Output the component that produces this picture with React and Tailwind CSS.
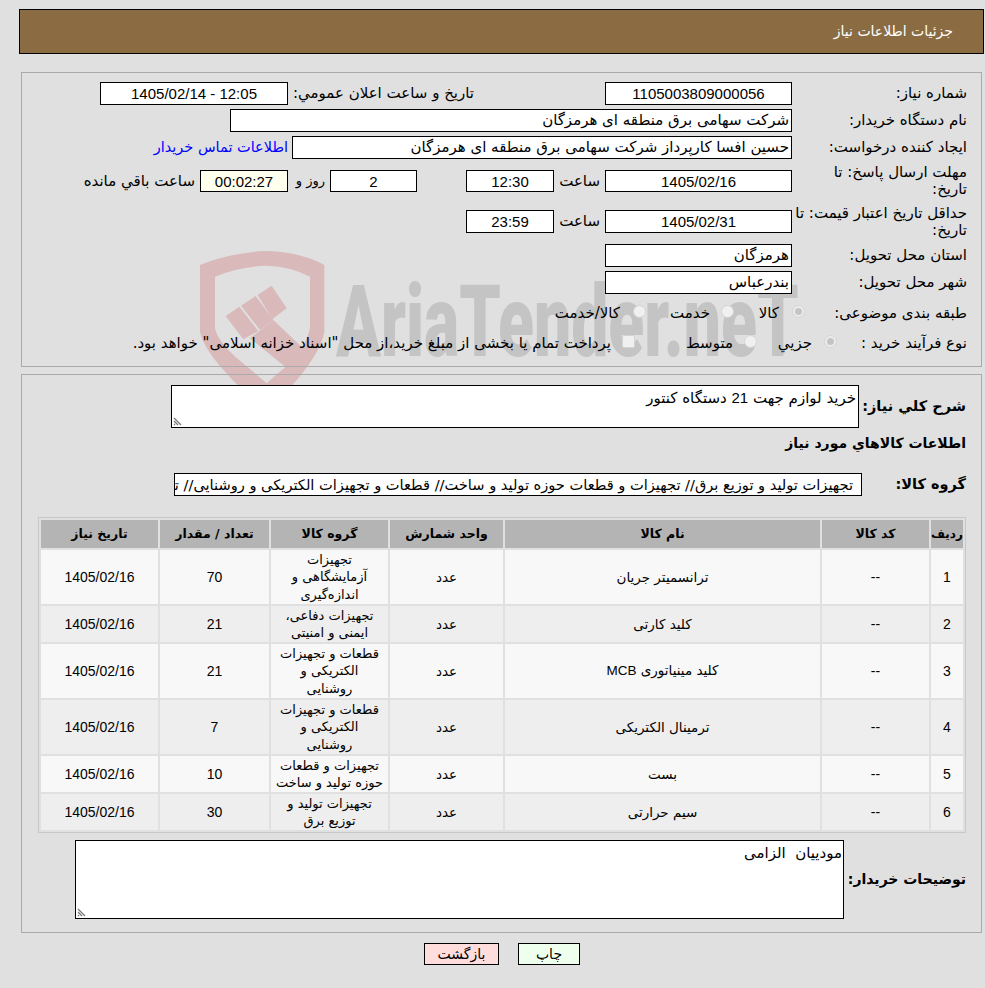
const NUM = "font-['Liberation_Sans',sans-serif]";

const ROWS = [
  { id: 1, name: "ترانسمیتر جریان", group: ["تجهیزات", "آزمایشگاهی و", "اندازه‌گیری"], qty: "70", h: "h-[54px]" },
  { id: 2, name: "کلید کارتی", group: ["تجهیزات دفاعی،", "ایمنی و امنیتی"], qty: "21", h: "h-[36px]" },
  { id: 3, name: <>کلید مینیاتوری <span className={NUM}>MCB</span></>, group: ["قطعات و تجهیزات", "الکتریکی و", "روشنایی"], qty: "21", h: "h-[54px]" },
  { id: 4, name: "ترمینال الکتریکی", group: ["قطعات و تجهیزات", "الکتریکی و", "روشنایی"], qty: "7", h: "h-[54px]" },
  { id: 5, name: "بست", group: ["تجهیزات و قطعات", "حوزه تولید و ساخت"], qty: "10", h: "h-[36px]" },
  { id: 6, name: "سیم حرارتی", group: ["تجهیزات تولید و", "توزیع برق"], qty: "30", h: "h-[36px]" },
];

const Field = ({ className = "", h = "h-[23px]", children }) => (
  <div className={`${NUM} ${h} border border-black flex items-center justify-center text-[15px] leading-none shrink-0 ${className}`}>
    {children}
  </div>
);

const TextField = ({ className = "", size = "text-[15px]", children }) => (
  <div className={`h-[23px] border border-black bg-white flex items-center px-[2px] ${size} whitespace-nowrap overflow-hidden shrink-0 ${className}`}>
    {children}
  </div>
);

const Label = ({ w = "w-[175px]", children }) => (
  <div className={`${w} shrink-0 text-[15px] leading-[17px] whitespace-nowrap`}>{children}</div>
);

const Radio = ({ checked, square }) => (
  <span className={`inline-flex items-center justify-center w-[13px] h-[13px] mb-[4px] shrink-0 border border-[#d4d4d4] ${checked ? "bg-[#ececec]" : "bg-[#f0f0f0]"} ${square ? "rounded-[2px]" : "rounded-full"}`}>
    {checked && <span className="w-[7px] h-[7px] rounded-full bg-[#c4c4c4]" />}
  </span>
);

const Grip = () => (
  <svg className="absolute left-[1px] bottom-[1px]" width="10" height="10" viewBox="0 0 10 10">
    <path d="M1 2l7 7M1 5l4 4M1 8l1 1" stroke="#777" strokeWidth="1.2" fill="none" />
  </svg>
);

const Watermark = () => (
  <div className="absolute inset-0 pointer-events-none">
    <svg className="absolute left-[195px] top-[245px]" width="140" height="145" viewBox="0 0 420 435">
      <g fill="#d9b9b9">
        <path
          fillRule="evenodd"
          d="M215 18 Q110 22 15 60 V260 Q30 340 215 500 Q372 350 388 260 V60 Q320 22 215 18 Z M215 62 Q130 65 60 95 V250 Q70 300 165 372 L215 415 L295 345 Q335 300 345 250 V95 Q290 65 215 62 Z"
        />
        <path d="M92 213 L133 185 L190 258 L145 283 Z" />
        <path d="M138 182 L182 153 L235 225 L195 255 Z" />
        <path d="M188 150 L230 122 L275 190 L232 222 Z" />
        <path d="M165 280 L235 225 L335 320 L295 385 Z" />
      </g>
    </svg>
    <div className="absolute left-[336px] top-[267px] font-['Roboto',sans-serif] font-black text-[#c4c4c4] text-[100px] leading-[110px] whitespace-nowrap origin-left scale-x-[0.66]" dir="ltr">
      AriaTender.neT
    </div>
  </div>
);

export default function App() {
  return (
    <div dir="rtl" className="font-['DejaVu_Sans',sans-serif] relative w-[985px] h-[988px] bg-[#e0e0e0] text-black overflow-hidden pt-[9px]">
      <Watermark />
      <div className="relative mr-[1px] w-[965px] h-[45px] border border-black bg-[#8b6c42] text-white text-[14px] flex items-center pr-[30px]">
        جزئیات اطلاعات نیاز
      </div>

      <div className="relative mt-[18px] mr-[3px] w-[961px] h-[295px] border border-[#aaa] pt-[7px] pr-[14px]">
        <div className="flex flex-col">
          <div className="flex items-center h-[27px]">
            <Label>شماره نیاز:</Label>
            <Field className="w-[187px] bg-white">1105003809000056</Field>
            <div className="w-[186px] mr-[131px] text-[15px] shrink-0 whitespace-nowrap">تاریخ و ساعت اعلان عمومي:</div>
            <Field className="w-[188px] bg-white"><span dir="ltr">1405/02/14 - 12:05</span></Field>
          </div>
          <div className="flex items-center h-[27px]">
            <Label>نام دستگاه خریدار:</Label>
            <TextField className="w-[562px]">شرکت سهامی برق منطقه ای هرمزگان</TextField>
          </div>
          <div className="flex items-center h-[27px]">
            <Label>ایجاد کننده درخواست:</Label>
            <TextField className="w-[500px]">حسین افسا کارپرداز شرکت سهامی برق منطقه ای هرمزگان</TextField>
            <a href="#" className="mr-[4px] text-[14.5px] text-[#0000ff] whitespace-nowrap">اطلاعات تماس خریدار</a>
          </div>
          <div className="flex items-center h-[40px]">
            <Label>مهلت ارسال پاسخ: تا<br />تاریخ:</Label>
            <Field h="h-[22px]" className="w-[187px] bg-white">1405/02/16</Field>
            <div className="w-[51px] text-[15px] pr-[5px]">ساعت</div>
            <Field h="h-[22px]" className="w-[88px] bg-white">12:30</Field>
            <div className="w-[49px]" />
            <Field h="h-[22px]" className="w-[87px] bg-white">2</Field>
            <div className="w-[42px] text-[13px] pr-[5px]">روز و</div>
            <Field h="h-[22px]" className="w-[88px] bg-[#ffffee]">00:02:27</Field>
            <div className="text-[15px] pr-[5px] whitespace-nowrap">ساعت باقي مانده</div>
          </div>
          <div className="flex items-center h-[41px]">
            <Label>حداقل تاریخ اعتبار قیمت: تا<br />تاریخ:</Label>
            <Field className="w-[187px] bg-white">1405/02/31</Field>
            <div className="w-[51px] text-[15px] pr-[5px]">ساعت</div>
            <Field className="w-[88px] bg-white">23:59</Field>
          </div>
          <div className="flex items-center h-[27px]">
            <Label>استان محل تحویل:</Label>
            <TextField className="w-[187px]">هرمزگان</TextField>
          </div>
          <div className="flex items-center h-[27px]">
            <Label>شهر محل تحویل:</Label>
            <TextField className="w-[187px]">بندرعباس</TextField>
          </div>
          <div className="flex items-center h-[34px] text-[15px]">
            <Label w="w-[162px]">طبقه بندی موضوعی:</Label>
            <Radio checked />
            <span className="mr-[13px] w-[45px]">کالا</span>
            <Radio />
            <span className="mr-[11px] w-[64px]">خدمت</span>
            <Radio />
            <span className="mr-[13px] whitespace-nowrap">کالا/خدمت</span>
          </div>
          <div className="flex items-center h-[26px] text-[15px]">
            <Label w="w-[130px]">نوع فرآیند خرید :</Label>
            <Radio checked />
            <span className="mr-[12px] w-[55px]">جزیي</span>
            <Radio />
            <span className="mr-[11px] w-[98px]">متوسط</span>
            <Radio square />
            <span className="mr-[11px] whitespace-nowrap">پرداخت تمام یا بخشی از مبلغ خرید،از محل "اسناد خزانه اسلامی" خواهد بود.</span>
          </div>
        </div>
      </div>

      <div className="relative mt-[7px] mr-[3px] w-[961px] h-[559px] border border-[#aaa] pr-[15px] pt-[10px]">
        <div className="flex items-center">
          <div className="w-[107px] shrink-0 text-[14.5px] font-bold whitespace-nowrap">شرح کلي نیاز:</div>
          <div className="relative w-[688px] h-[43px] bg-white border border-black text-[15px] px-[2px] pt-[1px]">
            خرید لوازم جهت <span className={NUM}>21</span> دستگاه کنتور
            <Grip />
          </div>
        </div>
        <div className="text-[14px] font-bold mt-[5px] h-[20px] leading-[20px]">اطلاعات کالاهاي مورد نیاز</div>
        <div className="flex items-center mt-[20px] h-[23px]">
          <div className="w-[104px] shrink-0 text-[14.5px] font-bold">گروه کالا:</div>
          <TextField size="text-[14.6px]" className="w-[688px] px-[8px]">تجهیزات تولید و توزیع برق// تجهیزات و قطعات حوزه تولید و ساخت// قطعات و تجهیزات الکتریکی و روشنایی// تجهیزات دفاعی</TextField>
        </div>

        <table className="mt-[21px] w-[928px] table-fixed border-separate border-spacing-[2px] border border-[#c8c8c8] text-[13.5px] text-center">
          <thead>
            <tr className="h-[28px] bg-[#b4b4b4] text-[12.5px]">
              <th className="w-[32px] font-bold text-[12px]">ردیف</th>
              <th className="w-[107px] font-bold">کد کالا</th>
              <th className="w-[315px] font-bold">نام کالا</th>
              <th className="w-[113px] font-bold">واحد شمارش</th>
              <th className="w-[117px] font-bold">گروه کالا</th>
              <th className="w-[109px] font-bold">تعداد / مقدار</th>
              <th className="font-bold">تاریخ نیاز</th>
            </tr>
          </thead>
          <tbody>
            {ROWS.map((row) => (
              <tr key={row.id} className={`${row.h} ${row.id % 2 ? "bg-[#f8f8f8]" : "bg-[#eeeeee]"}`}>
                <td className={`${NUM} text-[14px]`}>{row.id}</td>
                <td className={`${NUM} text-[14px]`}>--</td>
                <td>{row.name}</td>
                <td>عدد</td>
                <td className="leading-[17.5px] text-[13px]">
                  {row.group.map((line) => (
                    <div key={line} className="whitespace-nowrap">{line}</div>
                  ))}
                </td>
                <td className={`${NUM} text-[14px]`}>{row.qty}</td>
                <td className={`${NUM} text-[14px]`}>1405/02/16</td>
              </tr>
            ))}
          </tbody>
        </table>

        <div className="flex items-center mt-[7px]">
          <div className="w-[122px] shrink-0 text-[14px] font-bold whitespace-nowrap">توضیحات خریدار:</div>
          <div className="relative w-[769px] h-[79px] bg-white border border-black text-[15px] pr-[1px] pl-[2px] pt-[1px] whitespace-pre">
            مودییان  الزامی
            <Grip />
          </div>
        </div>
      </div>

      <div className="relative flex justify-center gap-[19px] mt-[10px] pl-[19px]">
        <button className="w-[62px] h-[22px] border border-black bg-[#eeffee] text-[14px] leading-none">چاپ</button>
        <button className="w-[75px] h-[22px] border border-black bg-[#ffdddd] text-[14px] leading-none">بازگشت</button>
      </div>
    </div>
  );
}
